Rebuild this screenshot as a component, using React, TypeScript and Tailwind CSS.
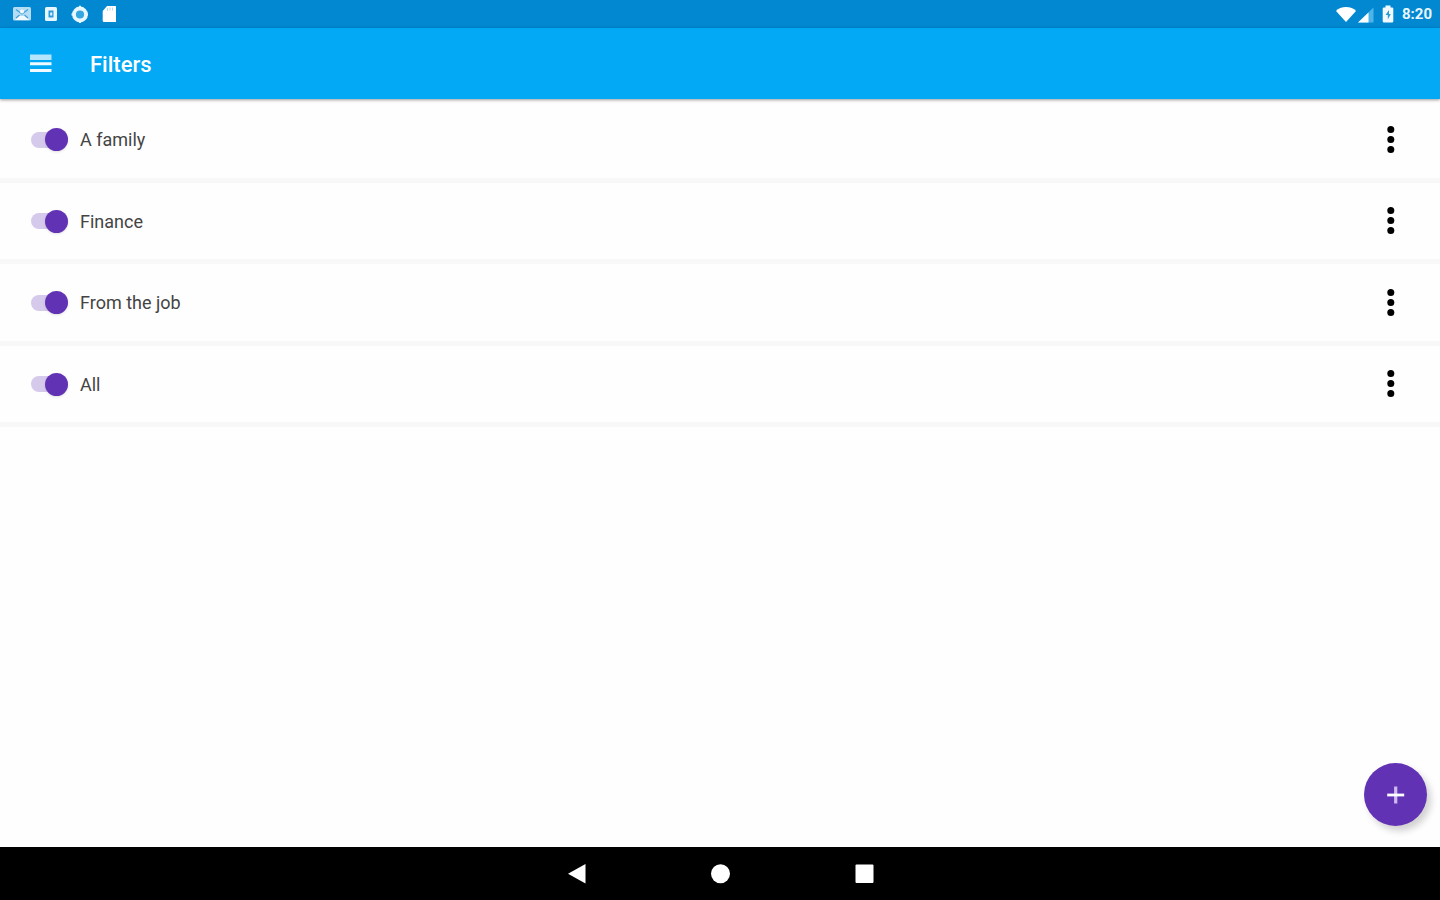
import { useState } from "react";

const initialFilters = ["A family", "Finance", "From the job", "All"];

function StatusBar() {
  return (
    <div className="flex h-7 shrink-0 items-center justify-between bg-[#0288d1] pr-2 pl-3 text-[#e8f7ff]">
      <div className="flex items-center">
        <svg className="h-5 w-5" viewBox="0 0 20 20" aria-hidden="true">
          <rect x="1" y="3" width="18" height="13.500" rx="1.500" fill="#b5dcf3" />
          <path d="M3 16l4.500-4h5l4.500 4z" fill="#f3faff" />
          <path d="M4 5.500l6 4.500 6-4.500M4 14l3.500-3M16 14l-3.500-3" fill="none" stroke="#3fa3dc" strokeWidth="1.200" />
          <circle cx="10" cy="7.500" r="2" fill="#f3faff" />
        </svg>
        <svg className="ml-2 h-5 w-5" viewBox="0 0 20 20" aria-hidden="true">
          <rect x="5" y="3" width="12" height="14" rx="1.500" fill="currentColor" />
          <path d="M8.500 6.500h5v7h-5zM10.200 8.500v3h2v-3z" fill="#2b9bd9" fillRule="evenodd" />
        </svg>
        <svg className="ml-2 h-5 w-5" viewBox="0 0 20 20" aria-hidden="true">
          <circle cx="12" cy="10.500" r="6" fill="#35a7df" stroke="currentColor" strokeWidth="3.800" />
          <path d="M12 1.800v3M12 16v3M3.500 10.500h3M17.500 10.500h2.500" stroke="currentColor" strokeWidth="2" />
        </svg>
        <svg className="ml-2 h-5 w-5" viewBox="0 0 20 20" aria-hidden="true">
          <path d="M11 2h8a1.300 1.300 0 0 1 1.300 1.300v13.400a1.300 1.300 0 0 1-1.300 1.300H8a1.300 1.300 0 0 1-1.300-1.300V7z" fill="white" />
          <path d="M11.500 4v3M14 3.500v3M16.500 3.500v3" stroke="#a9d8f2" strokeWidth="0.900" />
        </svg>
      </div>
      <div className="flex items-center">
        <svg className="h-5 w-5" viewBox="0 0 20 20" aria-hidden="true">
          <path d="M0 7C4 1.800 16 1.800 20 7L10 18z" fill="white" />
        </svg>
        <svg className="ml-0.5 h-5 w-4" viewBox="0 0 16 20" aria-hidden="true">
          <path d="M15.500 3.500v15H0z" fill="#4db4ea" />
          <path d="M10.500 8.500v10H0z" fill="white" />
        </svg>
        <svg className="ml-2 h-5 w-3" viewBox="0 0 12 20" aria-hidden="true">
          <path d="M3.500 1.500h5v2H10a1.300 1.300 0 0 1 1.300 1.300v12.400a1.300 1.300 0 0 1-1.300 1.300H2a1.300 1.300 0 0 1-1.300-1.300V4.800A1.300 1.300 0 0 1 2 3.500h1.500z" fill="#f3faff" />
          <path d="M7 6l-3.500 5h2.300v4.500l3-5.500H7z" fill="#2b9bd9" />
        </svg>
        <time className="ml-2 text-[15px] leading-5 font-bold">8:20</time>
      </div>
    </div>
  );
}

function FilterRow({ name }: { name: string }) {
  const [on, setOn] = useState(true);
  return (
    <li className="flex items-center justify-between border-b-5 border-[#f8f8f8] pr-9 pl-[31px] odd:h-[82px] even:h-[81px]">
      <label className="flex items-center gap-3 text-lg leading-6 text-[#444444]">
        <span className="relative flex h-6 w-[37px] items-center">
          <input
            type="checkbox"
            role="switch"
            checked={on}
            onChange={() => setOn(!on)}
            className="peer h-4 w-full appearance-none rounded-full bg-[#d6caec]"
          />
          <span className="pointer-events-none absolute left-0 h-[23px] w-[23px] rounded-full bg-gray-100 shadow-sm peer-checked:right-0 peer-checked:left-auto peer-checked:bg-[#6232b5]" />
        </span>
        <span className="pt-px">{name}</span>
      </label>
      <button type="button" aria-label={`Options for ${name}`} className="flex h-8 w-7 items-center justify-center">
        <svg className="h-8 w-4" viewBox="0 0 16 32" aria-hidden="true">
          <circle cx="8.800" cy="5.500" r="3.500" />
          <circle cx="8.800" cy="15.500" r="3.500" />
          <circle cx="8.800" cy="25.500" r="3.500" />
        </svg>
      </button>
    </li>
  );
}

export default function App() {
  return (
    <div className="flex min-h-screen flex-col bg-[#fefefe] font-['Roboto',sans-serif]">
      <StatusBar />
      <header className="z-10 flex h-[71px] shrink-0 items-center bg-[#03a9f4] pl-7 text-white shadow-[0_1px_3px_rgba(0,0,0,0.4)]">
        <button type="button" aria-label="Open menu" className="flex h-8 w-6 items-center justify-center">
          <svg className="h-6 w-6" viewBox="0 0 24 24" aria-hidden="true">
            <path d="M2 2.500h21.500v5.500H2z" fill="#b5e5fd" />
            <path d="M2 10.300h21.500v3H2zM2 17h21.500v3H2z" fill="#f0faff" />
          </svg>
        </button>
        <h1 className="ml-[38px] pt-0.5 text-[22px] leading-7 font-medium">Filters</h1>
      </header>
      <main className="flex flex-1 flex-col pt-0.5">
        <ul>
          {initialFilters.map((name) => (
            <FilterRow key={name} name={name} />
          ))}
        </ul>
        <button
          type="button"
          aria-label="Add filter"
          className="mt-auto mr-[13px] mb-[21px] flex h-[63px] w-[63px] items-center justify-center self-end rounded-full bg-[#6232b5] shadow-[4px_5px_7px_rgba(0,0,0,0.18)]"
        >
          <svg className="h-5 w-5" viewBox="0 0 20 20" aria-hidden="true">
            <path d="M9.700 1.500v17" stroke="#cdbbee" strokeWidth="3.200" />
            <path d="M1.200 10h17" stroke="white" strokeWidth="2.800" />
          </svg>
        </button>
      </main>
      <nav aria-label="System" className="flex h-[53px] shrink-0 items-center justify-center gap-[120px] bg-black">
        <button type="button" aria-label="Back" className="h-6 w-6">
          <svg className="h-6 w-6" viewBox="0 0 24 24" aria-hidden="true">
            <path d="M21.500 2v19.500L4 11.800z" fill="white" />
          </svg>
        </button>
        <button type="button" aria-label="Home" className="h-6 w-6">
          <svg className="h-6 w-6" viewBox="0 0 24 24" aria-hidden="true">
            <circle cx="12.500" cy="11.800" r="9.500" fill="white" />
          </svg>
        </button>
        <button type="button" aria-label="Recent apps" className="h-6 w-6">
          <svg className="h-6 w-6" viewBox="0 0 24 24" aria-hidden="true">
            <rect x="3.500" y="2.500" width="18" height="18.500" rx="1" fill="white" />
          </svg>
        </button>
      </nav>
    </div>
  );
}
